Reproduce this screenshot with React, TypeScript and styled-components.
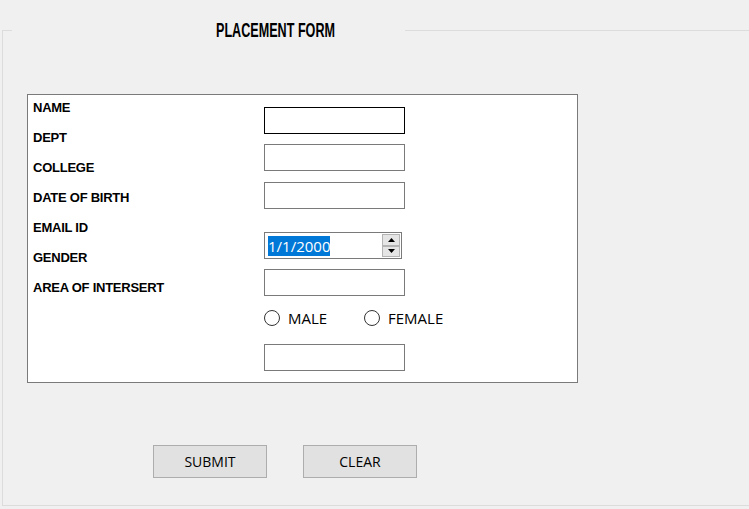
import styled, { createGlobalStyle } from "styled-components";

const GlobalStyle = createGlobalStyle`
    html, body {
        margin: 0;
        padding: 0;
        background-color: #f0f0f0;
        overflow: hidden;
    }
    body {
        width: 749px;
        height: 509px;
        font-family: "Open Sans", "Noto Sans", sans-serif;
    }
`;

const GroupBox = styled.fieldset`
    box-sizing: border-box;
    width: 760px;
    height: 488px;
    margin: 18px 0 0 2px;
    padding: 0;
    border: 1px solid #dcdcdc;
    min-inline-size: auto;
`;

const Legend = styled.legend`
    box-sizing: border-box;
    width: 393px;
    height: 24px;
    margin-left: 9px;
    padding: 0 0 0 204px;
    line-height: 24px;
    white-space: nowrap;
`;

// condensed display face is not installed, so squeeze a bold sans
const Title = styled.span`
    display: inline-block;
    font-family: "Liberation Sans", Arial, sans-serif;
    font-weight: 700;
    font-size: 21px;
    color: #000;
    transform: scaleX(0.6);
    transform-origin: left center;
`;

const Panel = styled.div`
    box-sizing: border-box;
    display: flex;
    width: 551px;
    height: 289px;
    margin: 52px 0 0 24px;
    background-color: #fff;
    border: 1px solid #7a7a7a;
`;

const LabelColumn = styled.div`
    display: flex;
    flex-direction: column;
    gap: 10px;
    width: 231px;
    padding: 3px 0 0 5px;
`;

const Label = styled.div`
    height: 20px;
    line-height: 20px;
    font-family: "Liberation Sans", Arial, sans-serif;
    font-weight: 700;
    font-size: 13px;
    letter-spacing: -0.25px;
    color: #000;
    white-space: nowrap;
`;

const ControlColumn = styled.div`
    display: flex;
    flex-direction: column;
    align-items: flex-start;
    padding-top: 12px;
`;

const Slot = styled.div<{ $gap: number }>`
    margin-top: ${(p) => p.$gap}px;
`;

const TextBox = styled.input<{ $focused?: boolean }>`
    box-sizing: border-box;
    display: block;
    width: 141px;
    height: 27px;
    margin: 0;
    padding: 0 3px;
    background: #fff;
    border: 1px solid ${(p) => (p.$focused ? "#000" : "#7a7a7a")};
    outline: none;
    font-family: "Open Sans", sans-serif;
    font-size: 14px;
`;

const DateBox = styled.div`
    box-sizing: border-box;
    display: flex;
    align-items: center;
    justify-content: space-between;
    width: 138px;
    height: 27px;
    padding: 0 1px 0 3px;
    background: #fff;
    border: 1px solid #7a7a7a;
`;

const SelectedText = styled.span`
    height: 20px;
    line-height: 20px;
    background-color: #0078d7;
    color: #fff;
    font-family: "Open Sans", sans-serif;
    font-size: 15px;
`;

const Spinner = styled.div`
    display: flex;
    flex-direction: column;
    width: 18px;
    height: 23px;
`;

const SpinButton = styled.div`
    box-sizing: border-box;
    flex: 1;
    display: flex;
    align-items: center;
    justify-content: center;
    background-color: #e5e5e5;
    border: 1px solid #b4b4b4;
`;

const RadioRow = styled.div`
    display: flex;
    align-items: center;
    height: 16px;
`;

const RadioOption = styled.label`
    display: flex;
    align-items: center;
    gap: 8px;
    width: 100px;
    font-family: "Open Sans", sans-serif;
    font-size: 15px;
    color: #000;
`;

const RadioCircle = styled.span`
    box-sizing: border-box;
    width: 16px;
    height: 16px;
    border: 1px solid #333;
    border-radius: 50%;
    background: #fff;
`;

const ButtonRow = styled.div`
    display: flex;
    gap: 36px;
    margin: 62px 0 0 150px;
`;

const Button = styled.button`
    box-sizing: border-box;
    width: 114px;
    height: 33px;
    margin: 0;
    padding: 0;
    background-color: #e1e1e1;
    border: 1px solid #adadad;
    font-family: "Open Sans", sans-serif;
    font-size: 14px;
    color: #000;
`;

const labels = [
    "NAME",
    "DEPT",
    "COLLEGE",
    "DATE OF BIRTH",
    "EMAIL ID",
    "GENDER",
    "AREA OF INTERSERT",
];

function Arrow({ up }: { up?: boolean }) {
    return (
        <svg width="7" height="4" viewBox="0 0 7 4">
            <path d={up ? "M0 4 L3.5 0 L7 4 Z" : "M0 0 L3.5 4 L7 0 Z"} fill="#000" />
        </svg>
    );
}

export default function App() {
    return (
        <>
            <GlobalStyle />
            <GroupBox>
                <Legend>
                    <Title>PLACEMENT FORM</Title>
                </Legend>
                <Panel>
                    <LabelColumn>
                        {labels.map((l) => (
                            <Label key={l}>{l}</Label>
                        ))}
                    </LabelColumn>
                    <ControlColumn>
                        <Slot $gap={0}>
                            <TextBox $focused />
                        </Slot>
                        <Slot $gap={10}>
                            <TextBox />
                        </Slot>
                        <Slot $gap={11}>
                            <TextBox />
                        </Slot>
                        <Slot $gap={23}>
                            <DateBox>
                                <SelectedText>1/1/2000</SelectedText>
                                <Spinner>
                                    <SpinButton>
                                        <Arrow up />
                                    </SpinButton>
                                    <SpinButton>
                                        <Arrow />
                                    </SpinButton>
                                </Spinner>
                            </DateBox>
                        </Slot>
                        <Slot $gap={10}>
                            <TextBox />
                        </Slot>
                        <Slot $gap={14}>
                            <RadioRow>
                                <RadioOption>
                                    <RadioCircle />
                                    MALE
                                </RadioOption>
                                <RadioOption>
                                    <RadioCircle />
                                    FEMALE
                                </RadioOption>
                            </RadioRow>
                        </Slot>
                        <Slot $gap={18}>
                            <TextBox />
                        </Slot>
                    </ControlColumn>
                </Panel>
                <ButtonRow>
                    <Button>SUBMIT</Button>
                    <Button>CLEAR</Button>
                </ButtonRow>
            </GroupBox>
        </>
    );
}
